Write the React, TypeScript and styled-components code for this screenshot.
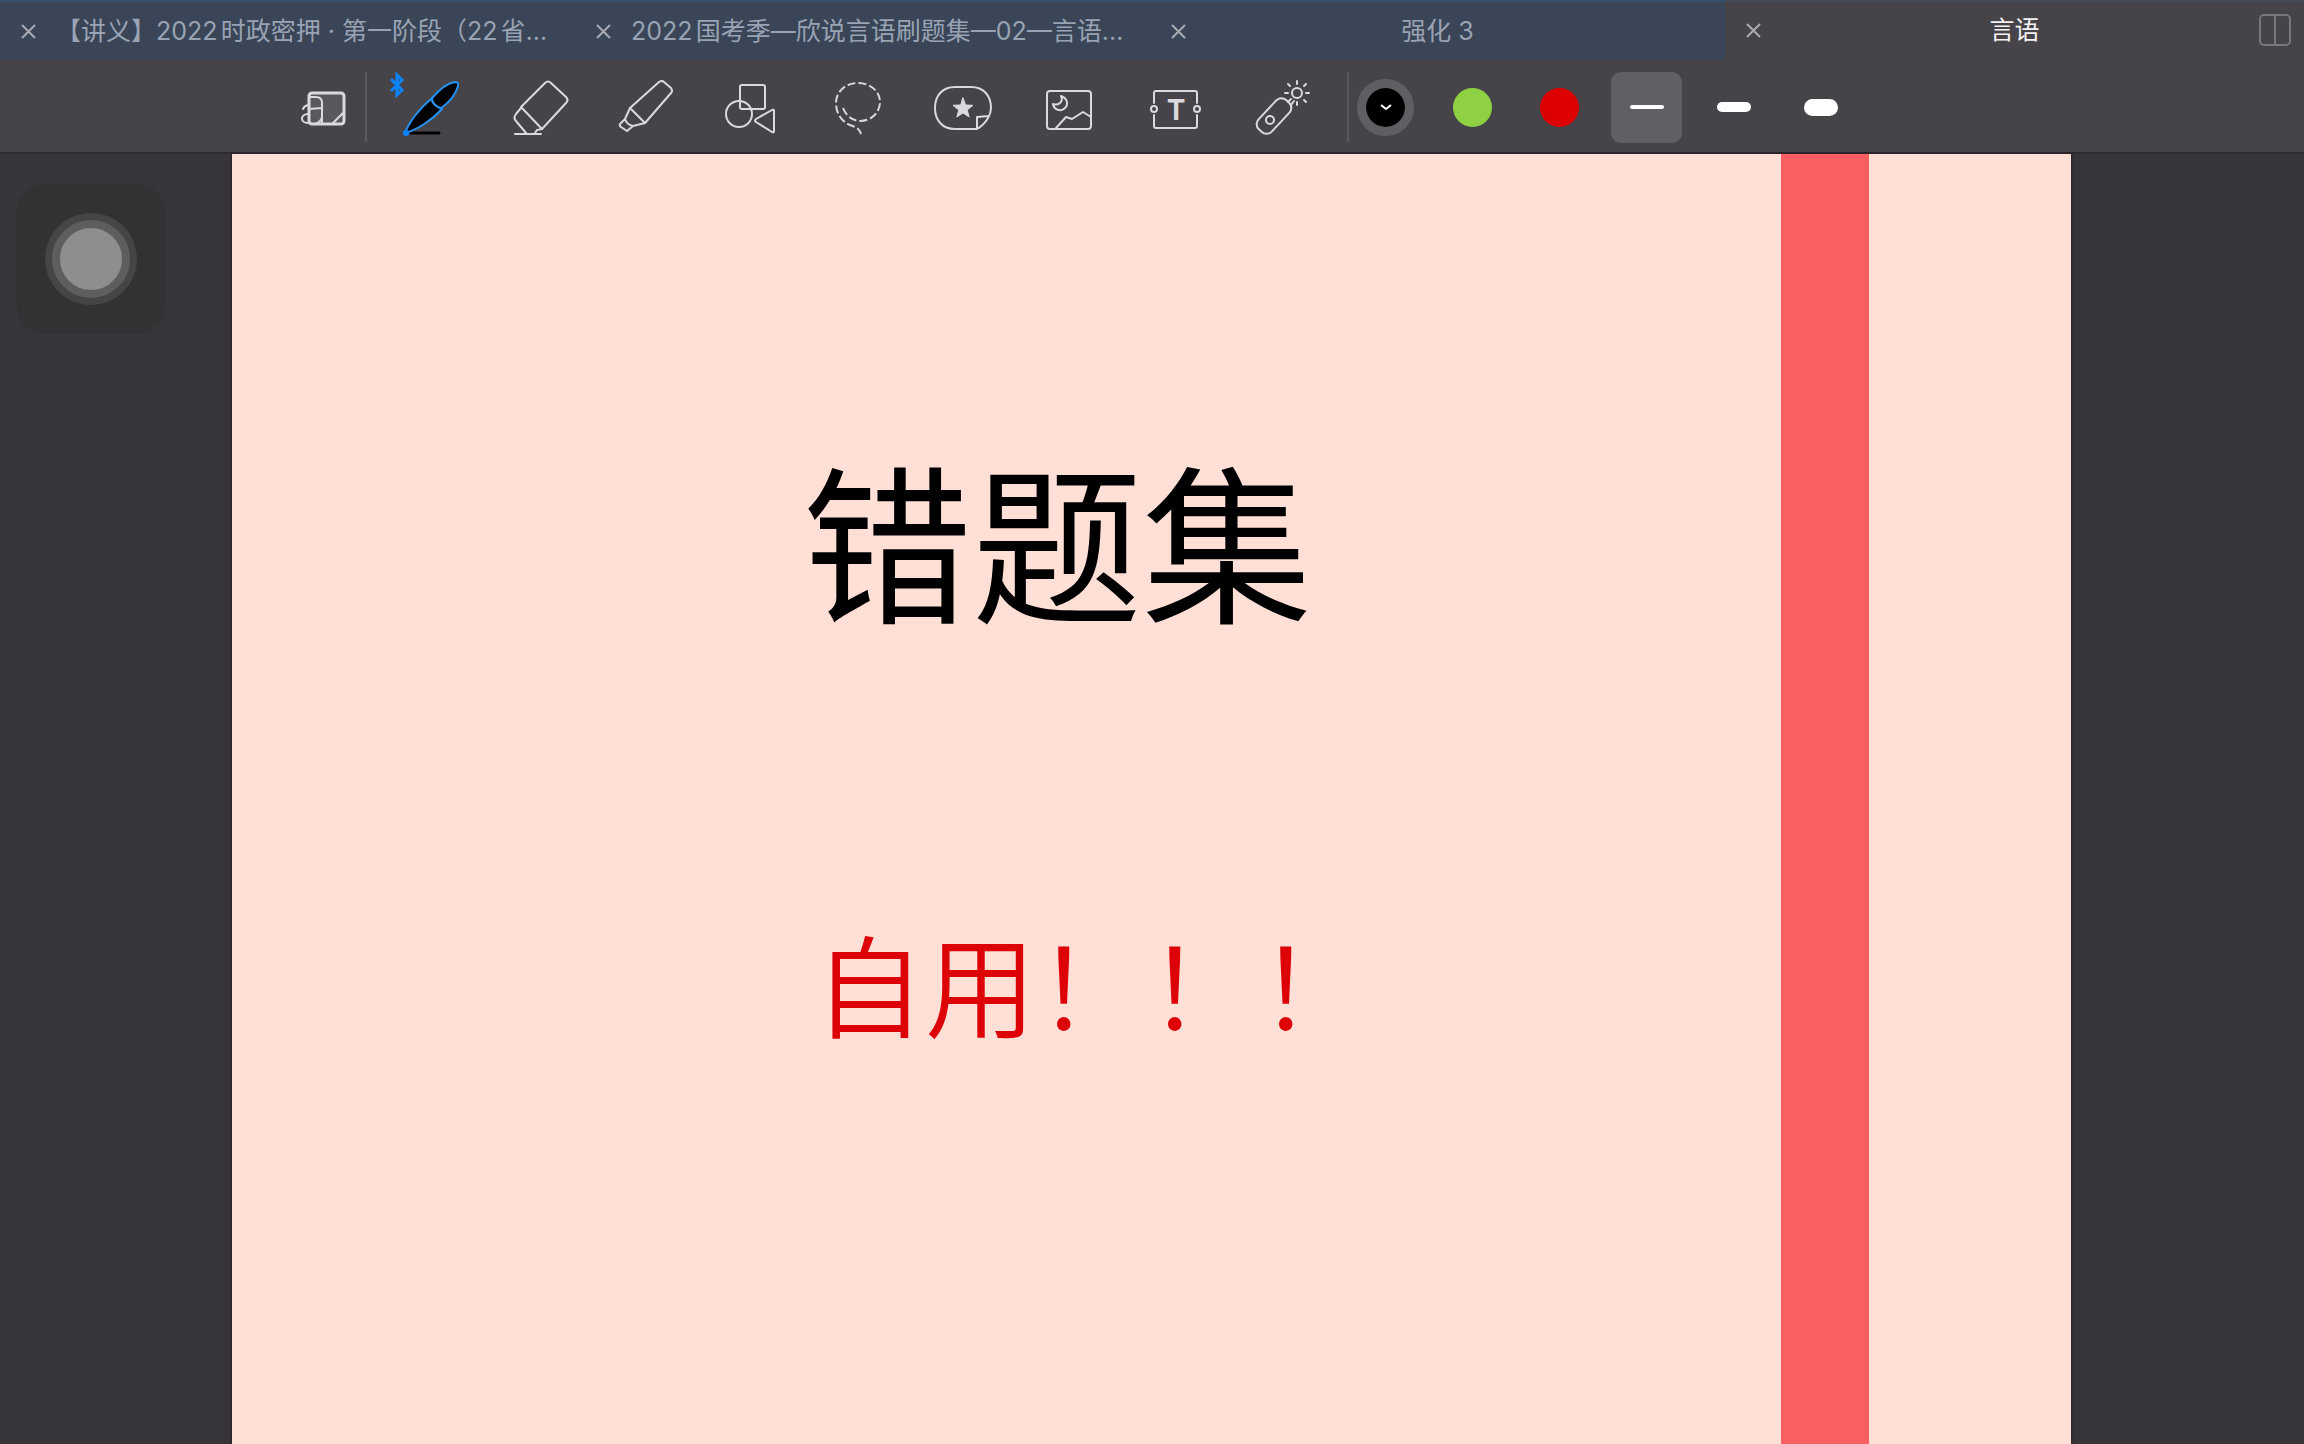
import React, { useState } from "react";
import styled, { createGlobalStyle } from "styled-components";

const GlobalStyle = createGlobalStyle`
  * { box-sizing: border-box; }
  body {
    margin: 0;
    background: #37353a;
    font-family: Inter, "Noto Sans CJK SC", sans-serif;
  }
  button {
    appearance: none;
    border: 0;
    padding: 0;
    margin: 0;
    background: none;
    color: inherit;
    font: inherit;
    cursor: pointer;
  }
  svg { display: block; }
`;

const Screen = styled.div`
  position: relative;
  min-height: 100vh;
  display: flex;
  flex-direction: column;
  overflow: hidden;
`;

const TabBar = styled.nav`
  display: grid;
  grid-template-columns: repeat(3, 575fr) 579fr;
  height: 60px;
  background: #464448;
`;

const Tab = styled.div<{ $active: boolean }>`
  display: grid;
  grid-template-columns: minmax(56px, 1fr) fit-content(500px) minmax(18px, 1fr);
  align-items: center;
  min-width: 0;
  padding-bottom: ${(p) => (p.$active ? 2 : 0)}px;
  background: ${(p) => (p.$active ? "#464448" : "#3a4558")};
  border-top: 2px solid ${(p) => (p.$active ? "#434a55" : "#37506c")};
  color: ${(p) => (p.$active ? "#f4f2f5" : "#99a3b3")};
`;

const CloseButton = styled.button`
  justify-self: start;
  margin-left: 20px;
  color: #a9abb3;
`;

const TabTitle = styled.button`
  min-width: 0;
  font-size: 25px;
  line-height: 36px;
  white-space: nowrap;
  text-autospace: normal;
`;

const SplitButton = styled.button`
  justify-self: end;
  margin-right: 12px;
  color: #77767a;
`;

const Toolbar = styled.div`
  display: flex;
  align-items: center;
  height: 94px;
  padding: 2px 0 0 291px;
  background: #464448;
  border-bottom: 2px solid #2d2a31;
`;

const Divider = styled.span<{ $before: number; $after: number }>`
  width: 2px;
  height: 70px;
  margin: 0 ${(p) => p.$after}px 0 ${(p) => p.$before}px;
  background: #59585c;
`;

const Tools = styled.div`
  display: flex;
  gap: 42px;
`;

const ToolButton = styled.button`
  position: relative;
  flex: none;
  width: 64px;
  height: 64px;
  color: #dcd9de;
`;

const Badge = styled.span`
  position: absolute;
  top: -3px;
  left: -14px;
`;

const Options = styled.div`
  display: flex;
  gap: 16px;
`;

const OptionButton = styled.button<{ $selected?: boolean }>`
  display: grid;
  place-items: center;
  flex: none;
  width: 71px;
  height: 71px;
  border-radius: 10px;
  background: ${(p) => (p.$selected ? "#605f64" : "transparent")};
`;

const Swatch = styled.span<{ $color: string; $selected: boolean }>`
  display: grid;
  place-items: center;
  box-sizing: content-box;
  width: 39px;
  height: 39px;
  border-radius: 50%;
  border: 9px solid ${(p) => (p.$selected ? "#5f5e63" : "transparent")};
  background: ${(p) => p.$color};
  background-clip: padding-box;
`;

const Stroke = styled.span<{ $height: number }>`
  width: 34px;
  height: ${(p) => p.$height}px;
  border-radius: 9px;
  background: #ffffff;
`;

const Workspace = styled.main`
  flex: 1;
  display: grid;
  grid-template-columns: 232fr 1839fr 233fr;
`;

const Sheet = styled.article`
  grid-column: 2;
  display: grid;
  grid-template-columns: 1549fr 88fr 202fr;
  background: #ffdfd6;
  box-shadow: 0 0 2px 1px #2a2023;
`;

const SheetBody = styled.div`
  padding: 258px 0 0 570px;
  font-family: "Noto Sans CJK SC", sans-serif;
  white-space: nowrap;
`;

const Title = styled.h1`
  margin: 0;
  font-size: 170px;
  line-height: 250px;
  font-weight: 400;
  color: #000000;
`;

const Subtitle = styled.p`
  margin: 240px 0 0 12px;
  font-size: 111px;
  line-height: 160px;
  font-weight: 350;
  color: #dc0207;
`;

const Stripe = styled.div`
  background: #f95f61;
`;

const TouchPad = styled.button`
  position: absolute;
  top: 184px;
  left: 16px;
  display: grid;
  place-items: center;
  width: 150px;
  height: 150px;
  border-radius: 30px;
  background: #333134;
`;

const TouchDot = styled.span`
  width: 78px;
  height: 78px;
  border-radius: 50%;
  border: 8px solid #5e5d60;
  background: #8f8d90;
  box-shadow: 0 0 0 7px #454447;
`;

const Glyph = ({ children }: { children: React.ReactNode }) => (
  <svg
    width="64"
    height="64"
    viewBox="0 0 64 64"
    fill="none"
    stroke="currentColor"
    strokeWidth="2"
    strokeLinejoin="round"
    strokeLinecap="round"
    aria-hidden="true"
  >
    {children}
  </svg>
);

const CloseIcon = () => (
  <svg width="17" height="17" viewBox="0 0 17 17" stroke="currentColor" strokeWidth="2" aria-hidden="true">
    <path d="M2 2 15 15M15 2 2 15" />
  </svg>
);

const SplitIcon = () => (
  <svg width="34" height="34" viewBox="0 0 34 34" fill="none" stroke="currentColor" strokeWidth="2" aria-hidden="true">
    <rect x="2" y="2" width="30" height="30" rx="4" />
    <path d="M17 2V32" />
  </svg>
);

const BluetoothIcon = () => (
  <svg width="16" height="26" viewBox="0 0 16 26" fill="none" stroke="#0a84ff" strokeWidth="3" aria-hidden="true">
    <path d="M2 7 13 18 8 23V3L13 8 2 19" />
  </svg>
);

const PageIcon = () => (
  <Glyph>
    <rect x="18" y="18" width="35" height="31" rx="3" fill="#59585c" strokeWidth="3" />
    <path d="M18 22H25Q31 22 31 28V49M18 34 31 33M31 42Q30 47 24 49M42 48 52 38" />
    <path d="M12 34Q13 31 17 30M17 39C9 39 9 48 17 48" />
  </Glyph>
);

const PenIcon = () => (
  <Glyph>
    <path d="M8 58H36" stroke="#000" strokeWidth="3" />
    <g fill="#000" stroke="#2492f5">
      <path d="M2 58C6 47 17 33 28 24C30 29 34 32 39 34C29 45 14 55 2 58Z" />
      <path d="M29 23C36 15 45 8 52 7Q56 7 55 11C53 19 46 28 38 33C33 32 29 28 29 23Z" />
    </g>
    <circle cx="3" cy="58" r="2" fill="#0a84ff" stroke="#0a84ff" />
  </Glyph>
);

const EraserIcon = () => (
  <Glyph>
    <path d="M12 32 36 8Q39 5 42 8L57 22Q60 25 57 28L33 54Z" />
    <path d="M12 33 7 39Q4 43 7 46L17 58M33 54 28 55 26 58M6 59H32" />
  </Glyph>
);

const HighlighterIcon = () => (
  <Glyph>
    <path d="M15 33 44 7Q47 5 49 7L56 13Q58 16 56 18L30 48Z" />
    <path d="M15 33 10 44Q12 50 18 51L30 48M10 44 5 49Q4 51 6 52L12 56 18 51" />
  </Glyph>
);

const ShapesIcon = () => (
  <Glyph>
    <rect x="19" y="10" width="25" height="24" rx="2" />
    <circle cx="18" cy="39" r="13" />
    <path d="M35 44 51 35Q53 34 53 36V56Q53 58 51 57L35 47Q33 46 35 44Z" />
  </Glyph>
);

const LassoIcon = () => (
  <Glyph>
    <path
      strokeLinecap="butt"
      strokeDasharray="8 3"
      d="M16 33C19 41 26 46 33 46C45 46 53 37 53 27C53 16 43 8 31 8C18 8 9 17 9 28C9 38 14 46 23 50C29 52 33 54 34 59"
    />
  </Glyph>
);

const StickerIcon = () => (
  <Glyph>
    <path d="M44 54H22C9 54 2 45 2 33C2 21 9 12 22 12H38C51 12 58 21 58 33Q58 38 55 43Q51 50 44 54ZM44 54V42L56 41" />
    <path
      fill="currentColor"
      strokeWidth="1"
      d="M30 23 32.6 30 40 30.3 34.2 35 36.2 42 30 38 23.8 42 25.8 35 20 30.3 27.4 30Z"
    />
  </Glyph>
);

const ImageIcon = () => (
  <Glyph>
    <rect x="8" y="16" width="44" height="38" rx="3" />
    <path d="M22 21C28 23 30 29 26 33C22 37 15 35 14 29C19 31 25 27 22 21ZM17 53 27 42 33 44 44 37 52 42" />
  </Glyph>
);

const TextIcon = () => (
  <Glyph>
    <path d="M9 28V18Q9 16 11 16H50Q52 16 52 18V28M9 40V51Q9 53 11 53H50Q52 53 52 51V40" />
    <circle cx="9" cy="34" r="3" />
    <circle cx="52" cy="34" r="3" />
    <text x="31" y="45" textAnchor="middle" fontFamily="Inter, sans-serif" fontSize="28" fontWeight="700" fill="currentColor" stroke="none">
      T
    </text>
  </Glyph>
);

const LaserIcon = () => (
  <Glyph>
    <rect x="-20" y="-9" width="40" height="18" rx="7" transform="translate(23 41) rotate(-47)" />
    <circle cx="19" cy="45" r="4" />
    <path d="M37 27 40 24M40 30 43 26" />
    <circle cx="46" cy="18" r="5" />
    <path d="M46 9V6M46 30V27M55 18H58M34 18H37M53 11 55 9M39 11 37 9M53 25 55 27" />
  </Glyph>
);

const tabs = [
  "【讲义】2022时政密押 · 第一阶段（22省…",
  "2022国考季—欣说言语刷题集—02—言语…",
  "强化 3",
  "言语",
];

const tools = [
  { name: "钢笔", Icon: PenIcon },
  { name: "橡皮擦", Icon: EraserIcon },
  { name: "荧光笔", Icon: HighlighterIcon },
  { name: "形状", Icon: ShapesIcon },
  { name: "套索", Icon: LassoIcon },
  { name: "贴纸", Icon: StickerIcon },
  { name: "图片", Icon: ImageIcon },
  { name: "文本", Icon: TextIcon },
  { name: "激光笔", Icon: LaserIcon },
];

const colors = [
  { name: "黑色", value: "#000000" },
  { name: "绿色", value: "#8ed142" },
  { name: "红色", value: "#dc0000" },
];

const strokes = [
  { name: "细", height: 4 },
  { name: "中", height: 10 },
  { name: "粗", height: 17 },
];

export default function App() {
  const [tab, setTab] = useState(3);
  const [color, setColor] = useState(0);
  const [stroke, setStroke] = useState(0);

  return (
    <Screen>
      <GlobalStyle />
      <TabBar>
        {tabs.map((title, i) => (
          <Tab key={title} $active={i === tab}>
            <CloseButton aria-label="关闭">
              <CloseIcon />
            </CloseButton>
            <TabTitle onClick={() => setTab(i)}>{title}</TabTitle>
            {i === tabs.length - 1 && (
              <SplitButton aria-label="分屏">
                <SplitIcon />
              </SplitButton>
            )}
          </Tab>
        ))}
      </TabBar>
      <Toolbar>
        <ToolButton aria-label="页面">
          <PageIcon />
        </ToolButton>
        <Divider $before={10} $after={36} />
        <Tools>
          {tools.map(({ name, Icon }, i) => (
            <ToolButton key={name} aria-label={name}>
              <Icon />
              {i === 0 && (
                <Badge>
                  <BluetoothIcon />
                </Badge>
              )}
            </ToolButton>
          ))}
        </Tools>
        <Divider $before={32} $after={1} />
        <Options>
          {colors.map((c, i) => (
            <OptionButton key={c.name} aria-label={c.name} onClick={() => setColor(i)}>
              <Swatch $color={c.value} $selected={i === color}>
                {i === color && (
                  <svg width="12" height="8" viewBox="0 0 12 8" fill="none" stroke="#fff" strokeWidth="2" aria-hidden="true">
                    <path d="M1 2 6 6 11 2" />
                  </svg>
                )}
              </Swatch>
            </OptionButton>
          ))}
          {strokes.map((s, i) => (
            <OptionButton key={s.name} aria-label={s.name} $selected={i === stroke} onClick={() => setStroke(i)}>
              <Stroke $height={s.height} />
            </OptionButton>
          ))}
        </Options>
      </Toolbar>
      <Workspace>
        <Sheet>
          <SheetBody>
            <Title>错题集</Title>
            <Subtitle>自用！！！</Subtitle>
          </SheetBody>
          <Stripe />
        </Sheet>
      </Workspace>
      <TouchPad aria-label="辅助触控">
        <TouchDot />
      </TouchPad>
    </Screen>
  );
}
